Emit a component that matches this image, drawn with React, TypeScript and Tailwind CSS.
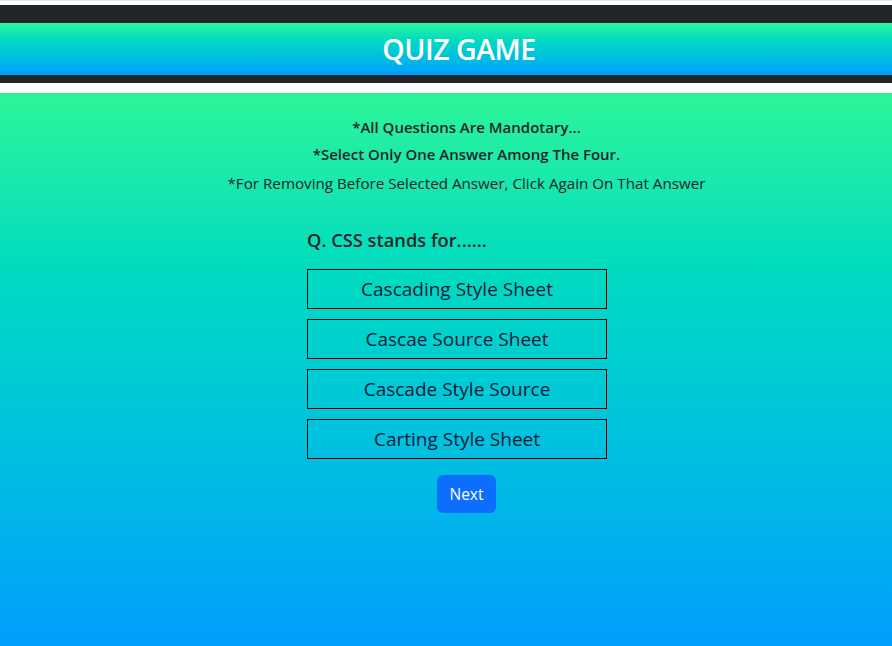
import { useState } from 'react';

const options = [
  'Cascading Style Sheet',
  'Cascae Source Sheet',
  'Cascade Style Source',
  'Carting Style Sheet',
];

export default function App() {
  const [picked, setPicked] = useState<number | null>(null);

  return (
    <div className="min-h-[646px] bg-white font-['Open_Sans',sans-serif] text-[#212529]">
      {/* Header */}
      <div className="pt-[4px] border-t border-[#e5e5e5]">
        <div className="bg-[#212529] pt-[18px] pb-[8px]">
          <div className="h-[52px] flex items-center justify-center pl-[26px] bg-gradient-to-b from-[#2af598] to-[#009efd]">
            <h1 className="text-white text-[28.5px] font-semibold tracking-[-0.5px]">QUIZ GAME</h1>
          </div>
        </div>
      </div>

      {/* Body */}
      <div className="mt-[10px] h-[553px] bg-gradient-to-b from-[#2af598] to-[#009efd] pt-[25px]">
        <div className="flex flex-col items-center text-center pl-[41px]">
          <p className="text-[15px] font-semibold leading-[18px]">*All Questions Are Mandotary...</p>
          <p className="mt-[9px] text-[15px] font-semibold leading-[18px]">*Select Only One Answer Among The Four.</p>
          <p className="mt-[11px] text-[15.2px] leading-[18px]">
            *For Removing Before Selected Answer, Click Again On That Answer
          </p>
        </div>

        <div className="mt-[36px] w-[300px] ml-[307px]">
          <h2 className="text-[18.3px] font-semibold leading-[24px]">Q. CSS stands for......</h2>
          <div className="mt-[17px] flex flex-col gap-[10px]">
            {options.map((opt, i) => (
              <button
                key={opt}
                onClick={() => setPicked(picked === i ? null : i)}
                className={
                  'h-[40px] w-[300px] border border-black text-[19px] text-[#0b1b3a] ' +
                  (picked === i ? 'bg-white/30' : 'bg-transparent')
                }
              >
                {opt}
              </button>
            ))}
          </div>
          <div className="mt-[16px] flex justify-center pl-[19px]">
            <button className="h-[38px] px-[12px] pt-[1px] rounded-[6px] bg-[#0d6efd] text-white text-[15.5px]">
              Next
            </button>
          </div>
        </div>
      </div>
    </div>
  );
}
